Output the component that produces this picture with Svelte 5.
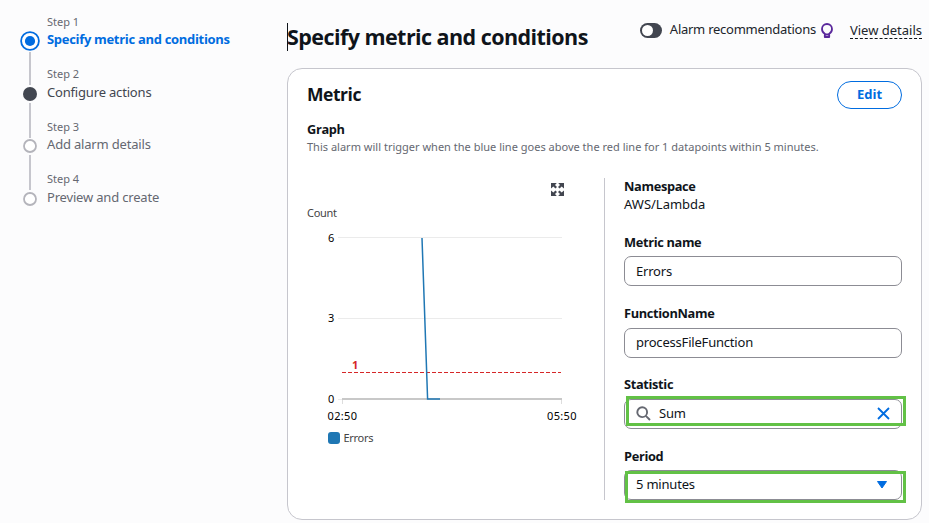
<script>
  const steps = [
    { title: 'Specify metric and conditions', state: 'active' },
    { title: 'Configure actions', state: 'visited' },
    { title: 'Add alarm details', state: 'todo' },
    { title: 'Preview and create', state: 'todo' }
  ];
</script>

<div class="page">
  <nav>
    {#each steps as step, i}
      <div class="step {step.state}">
        <div class="rail">
          <span class="marker">
            <svg width="20" height="20" viewBox="0 0 20 20">
              {#if step.state === 'active'}
                <circle cx="10" cy="10" r="8.9" fill="#fff" stroke="#006ce0" stroke-width="1.8" />
                <circle cx="10" cy="10" r="5.1" fill="#006ce0" />
              {:else if step.state === 'visited'}
                <circle cx="10" cy="10" r="7" fill="#424650" />
              {:else}
                <circle cx="10" cy="10" r="6" fill="#fff" stroke="#b4b4bb" stroke-width="1.8" />
              {/if}
            </svg>
          </span>
          {#if i < steps.length - 1}<span class="line"></span>{/if}
        </div>
        <div class="words">
          <div class="num"><span>Step {i + 1}</span></div>
          <div class="name"><span>{step.title}</span></div>
        </div>
      </div>
    {/each}
  </nav>

  <main>
    <header>
      <h1><i class="caret"></i><span>Specify metric and conditions</span></h1>
      <div class="tools">
        <span class="toggle"><i></i></span>
        <span class="rec">Alarm recommendations</span>
        <svg class="bulb" width="12" height="16" viewBox="0 0 12 16" fill="none" stroke="#59279b" stroke-width="1.8">
          <path d="M3.800 14V10.700C2.300 9.800 1 8.300 1 6a5 5 0 0 1 10 0c0 2.300-1.300 3.800-2.800 4.700v3.300z" stroke-linejoin="round" />
          <path d="M4 11.500h4M4 14.200h4" />
        </svg>
        <a class="details" href="#details">View details</a>
      </div>
    </header>

    <section class="card">
      <div class="head">
        <h2>Metric</h2>
        <button>Edit</button>
      </div>
      <div class="label graph">Graph</div>
      <p>This alarm will trigger when the blue line goes above the red line for 1 datapoints within 5 minutes.</p>

      <div class="body">
        <svg class="chart" width="297" height="322" viewBox="307 178 297 322">
          <g fill="#424650">
            <path d="M551 183h5.800l-1.800 2 2 2-1.600 1.600-2-2-2.400 2zM564 183v5.600l-2.400-2-2 2-1.600-1.600 2-2-1.800-2zM551 196v-5.600l2.400 2 2-2 1.600 1.600-2 2 1.800 2zM564 196h-5.800l1.800-2-2-2 1.600-1.600 2 2 2.400-2z" />
          </g>
          <text class="soft" x="307" y="217" textLength="30">Count</text>
          <path d="M338 237.500H562M338 318.500H562M338 399.500H342" stroke="#ebebeb" />
          <path d="M342.500 400V404M561.500 400V404" stroke="#ddd" />
          <path d="M342 399H562" stroke="#c8c8c8" stroke-width="2" />
          <text x="328" y="242">6</text>
          <text x="328" y="322">3</text>
          <text x="328" y="403">0</text>
          <path d="M342 372.500H561" stroke="#d62728" stroke-dasharray="4 2" />
          <path d="M422 238L427.600 399H440" fill="none" stroke="#1f77b4" stroke-width="1.500" />
          <text class="limit" x="352" y="369">1</text>
          <text x="327.500" y="420" textLength="29.500">02:50</text>
          <text x="547" y="420" textLength="29.500">05:50</text>
          <rect x="328" y="432" width="12" height="12" rx="3" fill="#1f77b4" />
          <text class="soft" x="343.500" y="442" textLength="30">Errors</text>
        </svg>

        <div class="fields">
          <div class="label">Namespace</div>
          <div class="value">AWS/Lambda</div>
          <div class="field">
            <div class="label">Metric name</div>
            <div class="input">Errors</div>
          </div>
          <div class="field">
            <div class="label">FunctionName</div>
            <div class="input pf">processFileFunction</div>
          </div>
          <div class="field">
            <div class="label stat-label">Statistic</div>
            <div class="input search">
              <svg width="15" height="15" viewBox="0 0 15 15" fill="none" stroke="#656871" stroke-width="1.900">
                <circle cx="6.200" cy="6.200" r="4.900" /><path d="M9.800 9.800L14 14" />
              </svg>
              <span>Sum</span>
              <svg class="end" width="13" height="13" viewBox="0 0 13 13" stroke="#006ce0" stroke-width="1.800">
                <path d="M1 1L12 12M12 1L1 12" />
              </svg>
              <i class="mark stat"></i>
            </div>
          </div>
          <div class="field">
            <div class="label">Period</div>
            <div class="input">
              <span>5 minutes</span>
              <svg class="end tri" width="12" height="9" viewBox="0 0 12 9"><path d="M1.500 1.500h9L6 8z" fill="#006ce0" stroke="#006ce0" stroke-linejoin="round" /></svg>
              <i class="mark period"></i>
            </div>
          </div>
        </div>
      </div>
    </section>
  </main>
</div>

<style>
  :global(body) { background: #fcfcfd; }
  .page {
    display: flex;
    box-sizing: border-box;
    width: 929px;
    height: 523px;
    overflow: hidden;
    font: 13px/18px "Noto Sans", "Open Sans", sans-serif;
    color: #0f141a;
  }
  nav { width: 267px; padding: 13px 0 0 20px; }
  .step { display: flex; height: 52.400px; color: #656871; }
  .rail { width: 20px; display: flex; flex-direction: column; align-items: center; padding-top: 18px; }
  .step:nth-child(even) .rail { padding-top: 19px; }
  .step:nth-child(even) .name { padding-top: 1px; }
  .marker { height: 20px; }
  .marker svg { display: block; }
  .line { width: 2px; height: 33px; margin: 1px 0 -21px; background: #c6c6cd; flex: none; }
  .visited .line, .todo .line { height: 35px; margin-top: -1px; }
  .words { padding-left: 7px; white-space: nowrap; }
  .num { font-size: 11px; }
  .name { letter-spacing: -0.180px; line-height: 16px; }
  .visited .name { color: #424650; }
  .active .name { color: #006ce0; font: 700 13px/16px "Open Sans", sans-serif; letter-spacing: -0.310px; }
  main { width: 635px; }
  header { display: flex; justify-content: space-between; height: 68px; }
  h1 { display: flex; margin: 23px 0 0; font: 700 21.500px/27px "Open Sans", sans-serif; letter-spacing: -0.560px; white-space: nowrap; }
  .caret { width: 1px; height: 28px; background: #0f141a; margin-right: -1px; }
  .tools { display: flex; align-items: flex-start; padding-top: 21px; white-space: nowrap; color: #21252c; }
  .toggle { width: 22px; height: 15px; border-radius: 8px; background: #424650; margin: 2px 8px 0 0; }
  .toggle i { display: block; width: 11px; height: 11px; border-radius: 50%; background: #fff; margin: 2px; }
  .rec { letter-spacing: -0.260px; line-height: 17px; }
  .bulb { margin: 2px 17px 0 5px; }
  .details { color: inherit; text-decoration: none; border-bottom: 1px dashed #0f141a; line-height: 16px; padding-top: 1px; }
  .card {
    box-sizing: border-box;
    height: 452px;
    border: 1px solid #c6c6cd;
    border-radius: 15px;
    background: #fff;
    padding: 12px 19px 0;
  }
  .head { display: flex; justify-content: space-between; height: 39px; }
  h2 { margin: 2px 0 0; font: 700 17.500px/22px "Open Sans", sans-serif; letter-spacing: -0.460px; }
  button {
    box-sizing: border-box;
    width: 65px;
    height: 28px;
    border: 1px solid #006ce0;
    border-radius: 14px;
    background: #fff;
    color: #006ce0;
    font: 700 13px/24px "Open Sans", sans-serif;
    padding: 0 0 2px;
  }
  .label { font: 700 12.800px/18px "Open Sans", sans-serif; letter-spacing: -0.340px; }
  p { margin: 0; font-size: 11px; color: #656871; white-space: nowrap; letter-spacing: 0.008px; }
  .body { display: flex; margin-top: 22px; height: 322px; }
  .chart { border-right: 1px solid #c6c6cd; font-size: 11px; display: block; flex: none; }
  .soft { fill: #444; }
  .limit { fill: #d62728; font-weight: 700; }
  .fields { width: 278px; padding-left: 19px; }
  .fields .label { line-height: 17px; padding-bottom: 1px; }
  .fields .stat-label { line-height: 15px; padding-bottom: 3px; }
  .value { margin-bottom: 21px; line-height: 17px; }
  .field { height: 71.300px; }
  .input {
    position: relative;
    display: flex;
    align-items: center;
    box-sizing: border-box;
    height: 30px;
    margin-top: 4px;
    padding: 0 11px 0 11px;
    border: 1px solid #8c8c94;
    border-radius: 7px;
    letter-spacing: -0.200px;
  }
  .pf { margin-top: 4.500px; padding-bottom: 1px; }
  .input span { margin-top: -2px; }
  .search svg:first-child { margin-right: 8px; }
  .end { margin-left: auto; }
  .tri { margin-right: 2px; }
  .mark { position: absolute; box-sizing: border-box; border: 3px solid #62c146; }
  .stat { left: 1px; top: -4px; width: 280px; height: 30px; }
  .period { left: 0; top: 0; width: 281px; height: 32px; }
</style>
